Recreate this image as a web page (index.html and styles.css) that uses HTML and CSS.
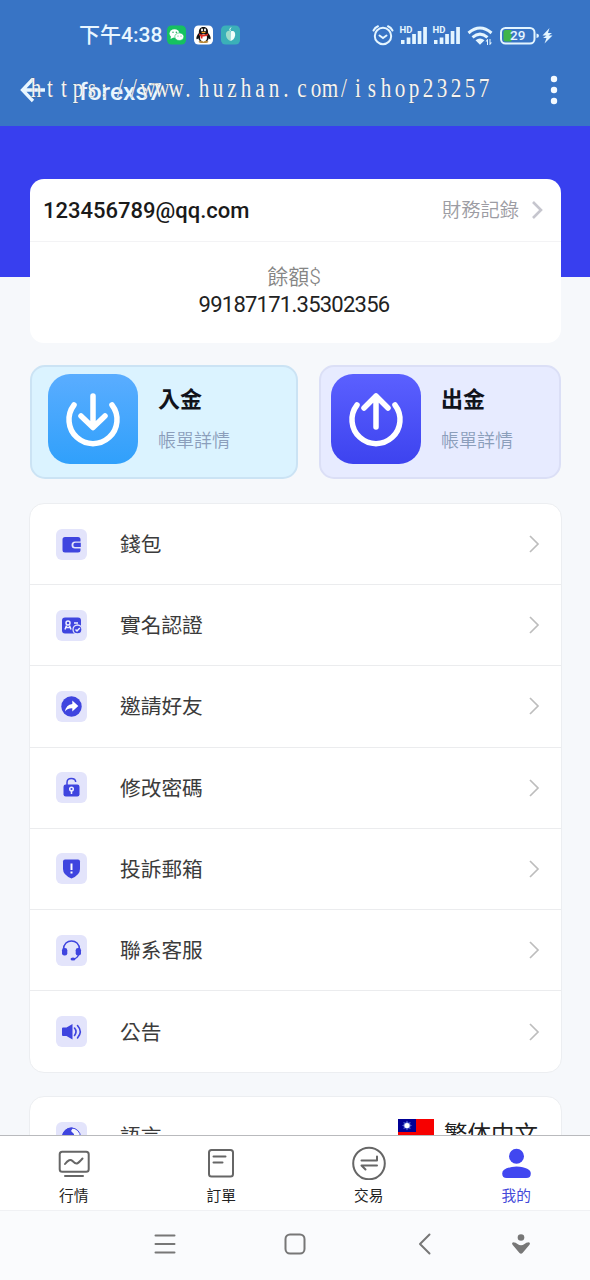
FILE: index.html
```html
<!DOCTYPE html>
<html lang="zh-Hant">
<head>
<meta charset="utf-8">
<title>forexs7</title>
<link rel="stylesheet" href="styles.css">
</head>
<body>
<div class="phone">
  <header class="top">
    <div class="status">
      <span class="time">下午4:38</span>
      <svg class="apps" width="74" height="20" viewBox="0 0 74 20">
        <rect width="19" height="19" y="0.5" rx="4.500" fill="#16c160"/>
        <ellipse cx="7.500" cy="8.500" rx="5" ry="4.300" fill="#fff"/><path d="M4 11l-.5 3 3-1.500z" fill="#fff"/>
        <ellipse cx="12.300" cy="11.700" rx="4.500" ry="3.800" fill="#fff" stroke="#16c160" stroke-width=".6"/>
        <g fill="#16a050"><circle cx="6" cy="7.300" r=".7"/><circle cx="9.300" cy="7.300" r=".7"/><circle cx="11" cy="11" r=".5"/><circle cx="14" cy="11" r=".5"/></g>
        <rect x="27" width="19" height="19" y="0.500" rx="4.500" fill="#fff"/>
        <path d="M36.500 2c-3.500 0-4.800 2.500-4.600 6-1.800 2-3 4.500-2.400 6 .4.700 1.200 0 1.800-.8.300 1.200.8 2 1.500 2.700h7.400c.8-.7 1.300-1.500 1.500-2.700.6.800 1.400 1.500 1.800.8.600-1.500-.6-4-2.400-6 .2-3.500-1.100-6-4.600-6z" fill="#111"/>
        <ellipse cx="36.500" cy="12.800" rx="3.500" ry="3.600" fill="#fff"/>
        <ellipse cx="35" cy="5" rx="1" ry="1.400" fill="#fff"/><ellipse cx="38" cy="5" rx="1" ry="1.400" fill="#fff"/>
        <path d="M32 8.500q4.500 2.500 9 0v1.700q-3 1.300-5.500 1.200v2.200h-1.800v-2.500L32 10.300z" fill="#e02a20"/>
        <ellipse cx="36.500" cy="7.500" rx="2.200" ry=".8" fill="#f5a623"/>
        <path d="M31.500 16.800q2.500-2 5 0 2.500-2 5 0-.3 1.200-5 1.200t-5-1.200z" fill="#b98a3a"/>
        <rect x="54" width="19" height="19" y="0.500" rx="4.500" fill="#3bb0b8"/>
        <path d="M63 6c-3-1-4.500 1.500-4 4.500.4 2.700 2.300 5 4.500 5.500z" fill="#9fdcca"/>
        <path d="M63.500 6.500c3.500-1.500 5 .8 4.600 4-.4 2.900-2.300 5-4.600 5.500z" fill="#f2fffa"/>
        <path d="M64 2.500q-2 1.500-.7 3.500" stroke="#e8fff4" fill="none"/>
      </svg>
      <svg class="signals" width="182" height="22" viewBox="0 0 182 22" fill="#e4f5ff">
        <g fill="none" stroke="#e4f5ff" stroke-width="2" stroke-linecap="round">
          <circle cx="11" cy="12" r="8.200"/><path d="M1.500 6.500Q3 3.500 6 2.300M20.500 6.500Q19 3.500 16 2.300M7.500 11.500l3.500 2.500 3.500-2.500"/>
        </g>
        <text class="hd" x="27.500" y="8.500">HD</text>
        <text class="hd" x="60.500" y="8.500">HD</text>
        <path d="M29 16h3.500v4H29zM34.700 13.500h3.700V20h-3.700zM40.200 10h3.700v10h-3.700zM45.700 7h3.700v13h-3.700zM51.200 3h3.700v17h-3.700z"/>
        <path d="M62 16h3.500v4H62zM67.700 13.500h3.700V20h-3.700zM73.200 10h3.700v10h-3.700zM78.700 7h3.700v13h-3.700zM84.200 3h3.700v17h-3.700z"/>
        <g fill="none" stroke="#e4f5ff" stroke-width="3"><path d="M96.500 9Q108 -1 119.500 9M100.500 13.300Q108 7 115.500 13.300"/></g>
        <path d="M103.500 16.300q4.500-3.500 9 0l-4.500 4.500zM115.500 15l-2 2.500h1.500V21h1v-6zM118 21l2-2.500h-1.500V15h-1v6z"/>
        <rect x="129" y="4" width="33.500" height="15.500" rx="4.500" fill="none" stroke="#e4f5ff" stroke-width="2"/>
        <path d="M131.500 8q0-2 2-2h6v11.500h-6q-2 0-2-2z" fill="#41b54a"/>
        <path d="M164.500 9.500q2.500.5 2.500 2.300t-2.500 2.300z"/>
        <text class="pct" x="138" y="16.300">29</text>
        <path d="M177.500 4l-7 7.500h4l-3.500 2.500h3.500l-2 5.500 8-8h-4l3.500-2.500h-4z"/>
      </svg>
    </div>
    <div class="bar">
      <svg width="26" height="26" viewBox="0 0 26 26" fill="none" stroke="#e9f6ff" stroke-width="3.300"><path d="M13 2L2.500 13 13 24M3 13h22"/></svg>
      <span class="title">forexs7</span>
      <svg class="dots" width="8" height="30" viewBox="0 0 8 30" fill="#f4faff"><circle cx="4" cy="4" r="3.200"/><circle cx="4" cy="15" r="3.200"/><circle cx="4" cy="26" r="3.200"/></svg>
    </div>
    <svg class="watermark" width="470" height="34" viewBox="0 0 470 34">
      <text transform="scale(.8 1)" y="23" x="8.750 26.250 43.750 61.250 78.750 93.750 113.750 131.250 148.750 166.250 183.750 198.750 218.750 236.250 253.750 271.250 288.750 306.250 321.250 341.250 358.750 376.250 393.750 411.250 428.750 446.250 463.750 481.250 498.750 516.250 533.750 551.250 568.750">https://www.huzhan.com/ishop23257</text>
    </svg>
  </header>

  <main class="content">
    <section class="account">
      <div class="account-head">
        <span class="mail">123456789@qq.com</span>
        <span class="records">財務記錄</span>
        <svg width="14" height="20" viewBox="0 0 14 20" fill="none" stroke="#c6c6ce" stroke-width="2.600"><path d="M3 2l8 8-8 8"/></svg>
      </div>
      <div class="balance">
        <div class="balance-label">餘額$</div>
        <div class="balance-value">99187171.35302356</div>
      </div>
    </section>

    <section class="actions">
      <div class="action deposit">
        <svg width="90" height="90" viewBox="0 0 90 90">
          <defs><linearGradient id="g1" x2="0" y2="1"><stop stop-color="#5aadff"/><stop offset="1" stop-color="#30a0fb"/></linearGradient></defs>
          <rect width="90" height="90" rx="22" fill="url(#g1)"/>
          <path d="M26 31a24 24 0 1 0 38 0M45 22v31M33 42l12 11.500L57 42" fill="none" stroke="#fff" stroke-width="5.500" stroke-linecap="round" stroke-linejoin="round"/>
        </svg>
        <div><div class="action-title">入金</div><div class="action-sub">帳單詳情</div></div>
      </div>
      <div class="action withdraw">
        <svg width="90" height="90" viewBox="0 0 90 90">
          <defs><linearGradient id="g2" x2="0" y2="1"><stop stop-color="#5b60ff"/><stop offset="1" stop-color="#3d43ef"/></linearGradient></defs>
          <rect width="90" height="90" rx="22" fill="url(#g2)"/>
          <path d="M26 31a24 24 0 1 0 38 0M45 53V22M33 34l12-12 12 12" fill="none" stroke="#fff" stroke-width="5.500" stroke-linecap="round" stroke-linejoin="round"/>
        </svg>
        <div><div class="action-title">出金</div><div class="action-sub">帳單詳情</div></div>
      </div>
    </section>

    <section class="menu">
      <div class="row">
        <svg class="icon" viewBox="0 0 31 31"><path d="M9 8h13q2.500 0 2.500 2.500v2H19a3.500 3.500 0 0 0 0 7h5.500v1.500q0 2.500-2.500 2.500H9q-2.500 0-2.500-2.500V10.500Q6.500 8 9 8z"/><path d="M24.800 13.700H19.500a2.200 2.200 0 0 0 0 4.400h5.300z"/></svg>
        <span>錢包</span><svg class="chev" viewBox="0 0 12 20"><path d="M2 2l8 8-8 8"/></svg>
      </div>
      <div class="row">
        <svg class="icon" viewBox="0 0 31 31"><rect x="6" y="7.500" width="19" height="16" rx="3"/><g class="cut"><circle cx="12" cy="13" r="2"/><path d="M9 19.500l1.500-4M15 19.500l-1.500-4M10 17.500h4M18 13h4"/></g><circle cx="21.500" cy="19.500" r="4.500" fill="#3f45df" stroke="#e3e4fb" stroke-width="1.300"/><path class="cut" d="M19.500 19.500l1.500 1.500 2.800-3"/></svg>
        <span>實名認證</span><svg class="chev" viewBox="0 0 12 20"><path d="M2 2l8 8-8 8"/></svg>
      </div>
      <div class="row">
        <svg class="icon" viewBox="0 0 31 31"><circle cx="15.500" cy="15.500" r="10.200"/><path d="M16.300 9.500l6 5.500-6 5.500v-3.300q-4.500-.3-7.300 3.300 1-6.800 7.300-7.600z" fill="#fff"/></svg>
        <span>邀請好友</span><svg class="chev" viewBox="0 0 12 20"><path d="M2 2l8 8-8 8"/></svg>
      </div>
      <div class="row">
        <svg class="icon" viewBox="0 0 31 31"><rect x="7.500" y="12.500" width="16" height="12" rx="2.200"/><path d="M11 13v-2.500q0-4 4.300-4t4.400 3.500" fill="none" stroke="#3f45df" stroke-width="1.500"/><circle cx="15.500" cy="17" r="1.800" class="cut"/><path class="cut" d="M15.500 19v3"/></svg>
        <span>修改密碼</span><svg class="chev" viewBox="0 0 12 20"><path d="M2 2l8 8-8 8"/></svg>
      </div>
      <div class="row">
        <svg class="icon" viewBox="0 0 31 31"><path d="M9 6.500h13q2 0 2 2v7.500q0 6-8.500 9.500Q7 22 7 16V8.500q0-2 2-2z"/><path d="M14.500 10.500h2V17h-2zM14.500 18.500h2v2h-2z" fill="#fff"/></svg>
        <span>投訴郵箱</span><svg class="chev" viewBox="0 0 12 20"><path d="M2 2l8 8-8 8"/></svg>
      </div>
      <div class="row">
        <svg class="icon" viewBox="0 0 31 31"><path d="M7.500 14.500C7.500 3 23.500 3 23.500 14.500M22.800 18.500q-.8 5-5.800 5.500" fill="none" stroke="#3f45df" stroke-width="1.500"/><rect x="6" y="13" width="5.300" height="7.500" rx="2.300"/><rect x="19.700" y="13" width="5.300" height="7.500" rx="2.300"/><ellipse cx="17" cy="24" rx="2.500" ry="1.500"/></svg>
        <span>聯系客服</span><svg class="chev" viewBox="0 0 12 20"><path d="M2 2l8 8-8 8"/></svg>
      </div>
      <div class="row">
        <svg class="icon" viewBox="0 0 31 31"><path d="M6 12.500q0-1 1-1h3.500L16.500 8v15.500L10.500 20H7q-1 0-1-1z"/><path d="M18.500 12q3 3.500 0 7.500M21.500 9.500q5.500 6 0 12.500" fill="none" stroke="#3f45df" stroke-width="1.600" stroke-linecap="round"/></svg>
        <span>公告</span><svg class="chev" viewBox="0 0 12 20"><path d="M2 2l8 8-8 8"/></svg>
      </div>
    </section>

    <section class="menu language">
      <div class="row">
        <svg class="icon" viewBox="0 0 31 31"><circle cx="15.500" cy="15" r="9" fill="#f4f5ff" stroke="#3f45df"/><path d="M6 15a9.500 9.500 0 0 1 11-9.300L15 9l3 3v3z"/></svg>
        <span>語言</span>
        <svg class="flag" viewBox="0 0 36 24"><path fill="#f70000" d="M0 0h36v24H0z"/><path fill="#000095" d="M0 0h18v13H0z"/><path fill="#5666d0" d="M9 1.500l1.300 2.200 2.400-.8-.8 2.400 2.100 1.200-2.100 1.300.8 2.300-2.400-.8L9 11.500 7.700 9.300l-2.400.8.8-2.300L4 6.500l2.100-1.200-.8-2.400 2.400.8z"/><circle cx="9" cy="6.500" r="2.600" fill="#fff"/></svg>
        <span class="lang">繁体中文</span>
      </div>
    </section>
  </main>

  <nav class="tabs">
    <div class="tab"><svg viewBox="0 0 34 34"><rect x="2.700" y="5.700" width="29" height="20" rx="2.500"/><path d="M8 18q4.500-6 7.500-3t4.500 2.500q1.500-.5 5.500-5M8 30h18"/></svg><span>行情</span></div>
    <div class="tab"><svg viewBox="0 0 34 34"><rect x="5" y="4" width="24" height="26.500" rx="2.500"/><path d="M9.500 10.500h12M9.500 16.500h9"/></svg><span>訂單</span></div>
    <div class="tab"><svg viewBox="0 0 34 34"><circle cx="17" cy="17.500" r="15.800"/><path d="M9.500 14.500h15.500v-4M25 19.500H9.500l4 4"/></svg><span>交易</span></div>
    <div class="tab active"><svg viewBox="0 0 34 34"><circle cx="17.500" cy="10.300" r="7.500"/><path d="M3.200 27.500q0-6 14.300-7 14.300 1 14.300 7 0 4.500-4.500 4.500H7.700q-4.500 0-4.500-4.500z"/></svg><span>我的</span></div>
  </nav>

  <footer class="system">
    <svg viewBox="0 0 24 24"><path d="M2.500 3.500h19M2.500 12h19M2.500 20.500h19"/></svg>
    <svg viewBox="0 0 24 24"><rect x="2.500" y="2.500" width="19" height="19" rx="4.500"/></svg>
    <svg viewBox="0 0 24 24"><path d="M16.500 2.500L7 12l9.500 9.500"/></svg>
    <svg class="solid" viewBox="0 0 24 24"><circle cx="12" cy="5.500" r="3.300"/><path d="M4 10.200q3 .3 4.500 1.700 3.500 2.500 7 0 1.500-1.400 4.500-1.700 1.700.8.500 2.500L13.500 21q-1.500 1.500-3 0l-7-8.300q-1.200-1.700.5-2.500z"/></svg>
  </footer>
</div>
</body>
</html>
```

FILE: styles.css
```css
* { box-sizing: border-box; }
body {
  margin: 0;
  font-family: Roboto, "Noto Sans CJK TC", sans-serif;
  color: #222;
}
svg { display: block; flex: none; }
.phone {
  width: 590px;
  height: 1280px;
  display: flex;
  flex-direction: column;
  overflow: hidden;
  background: #f6f8fb;
}
.top {
  position: relative;
  height: 126px;
  flex: none;
  background: #3874c5;
}
.status {
  display: flex;
  align-items: center;
  height: 70px;
  padding: 0 36px 0 79px;
}
.time {
  width: 87px;
  font-size: 21px;
  font-weight: 500;
  line-height: 30px;
  color: #e9f6ff;
  white-space: nowrap;
}
.apps { margin-left: 1px; }
.signals { margin-left: auto; }
.hd { font: 700 9.500px Roboto, sans-serif; }
.pct { font: 500 13.500px Roboto, sans-serif; }
.bar {
  display: flex;
  align-items: center;
  height: 40px;
  padding: 0 32px 0 20px;
}
.title {
  margin: 3px 0 0 33px;
  font-size: 24.500px;
  font-weight: 500;
  line-height: 30px;
  color: #e9f6ff;
}
.dots { margin-left: auto; }
.watermark {
  position: absolute;
  left: 29px;
  top: 74px;
}
.watermark text {
  font: 26.500px "Liberation Serif", serif;
  text-anchor: middle;
  fill: #f4f4f4;
  stroke: #555;
  stroke-width: .4;
  paint-order: stroke;
}
.content {
  flex: 1;
  min-height: 0;
  overflow: hidden;
  padding: 53px 29px 0 30px;
  background: linear-gradient(#383fef 151px, transparent 151px);
}
.account {
  height: 164px;
  border-radius: 14px;
  background: #fff;
}
.account-head {
  display: flex;
  align-items: center;
  height: 63px;
  padding: 0 17px 0 13px;
  border-bottom: 1px solid #f3f3f5;
}
.mail {
  font-size: 22px;
  font-weight: 500;
  color: #1a1a1a;
}
.records {
  margin: -2px 11px 0 auto;
  font-size: 19.300px;
  color: #9c9ca3;
  font-weight: 350;
}
.balance {
  padding: 21px 3px 0 0;
  text-align: center;
  line-height: 28px;
}
.balance-label { font-size: 21px; color: #858585; font-weight: 350; }
.balance-value { font-size: 22px; letter-spacing: -0.750px; color: #222; }
.actions {
  display: grid;
  grid-template-columns: 268px 242px;
  gap: 21px;
  margin-top: 22px;
}
.action {
  display: flex;
  height: 114px;
  border: 2px solid;
  border-radius: 15px;
  padding: 7px 0 0 16px;
  gap: 20px;
}
.deposit { background: #dbf3ff; border-color: #cbe3f4; }
.withdraw { background: #e7ebff; border-color: #dbdff6; padding-left: 10px; }
.action-title {
  margin-top: 8px;
  font-size: 22px;
  line-height: 36px;
  font-weight: 700;
  color: #11131b;
}
.action-sub {
  margin-top: 7px;
  font-size: 18px;
  line-height: 32px;
  font-weight: 350;
  color: #8b9ebb;
}
.menu {
  margin: 24px -1px 0 -1px;
  border: 1px solid #eceef1;
  border-radius: 15px;
  background: #fff;
}
.row {
  display: flex;
  align-items: center;
  height: 81.200px;
  padding: 0 21px 0 26px;
  border-bottom: 1px solid #ebecee;
  font-size: 20.700px;
  color: #3b3b3b;
}
.row:last-child { border-bottom: 0; }
.row span { margin: -2px 0 0 33px; }
.icon {
  width: 31px;
  height: 31px;
  border-radius: 6px;
  background: #e3e4fb;
  fill: #3f45df;
}
.cut { fill: none; stroke: #eeefff; stroke-width: 1.500; }
.chev {
  width: 12px;
  height: 20px;
  margin-left: auto;
  fill: none;
  stroke: #bdbdbd;
  stroke-width: 1.700;
}
.language { margin-top: 23px; height: 82px; }
.language .row span { margin-top: -6px; }
.flag { width: 36px; height: 24px; margin: 0 0 13px auto; }
.language .row .lang {
  margin: 0 2px 9px 10px;
  font-size: 23.500px;
  color: #222;
}
.tabs {
  flex: none;
  display: grid;
  grid-template-columns: repeat(4, 1fr);
  height: 75px;
  border-top: 1px solid #b9babd;
  background: #fff;
}
.tab {
  display: flex;
  flex-direction: column;
  align-items: center;
  padding-top: 10px;
  font-size: 14.700px;
  line-height: 24px;
  color: #222;
}
.tab svg {
  width: 34px;
  height: 34px;
  margin-bottom: 4px;
  fill: none;
  stroke: #666;
  stroke-width: 2;
  stroke-linecap: round;
  stroke-linejoin: round;
}
.tab.active { color: #4449d9; }
.tab.active svg { fill: #4147f0; stroke: none; }
.system {
  flex: none;
  display: flex;
  align-items: center;
  height: 70px;
  padding: 0 57px 3px 153px;
  border-top: 1px solid #f0f1f4;
  background: #fafbfd;
}
.system svg {
  width: 24px;
  height: 24px;
  fill: none;
  stroke: #777;
  stroke-width: 2;
  stroke-linecap: round;
  stroke-linejoin: round;
}
.system svg + svg { margin-left: 106px; }
.system .solid { margin-left: 72px; fill: #777; stroke: none; }
```
